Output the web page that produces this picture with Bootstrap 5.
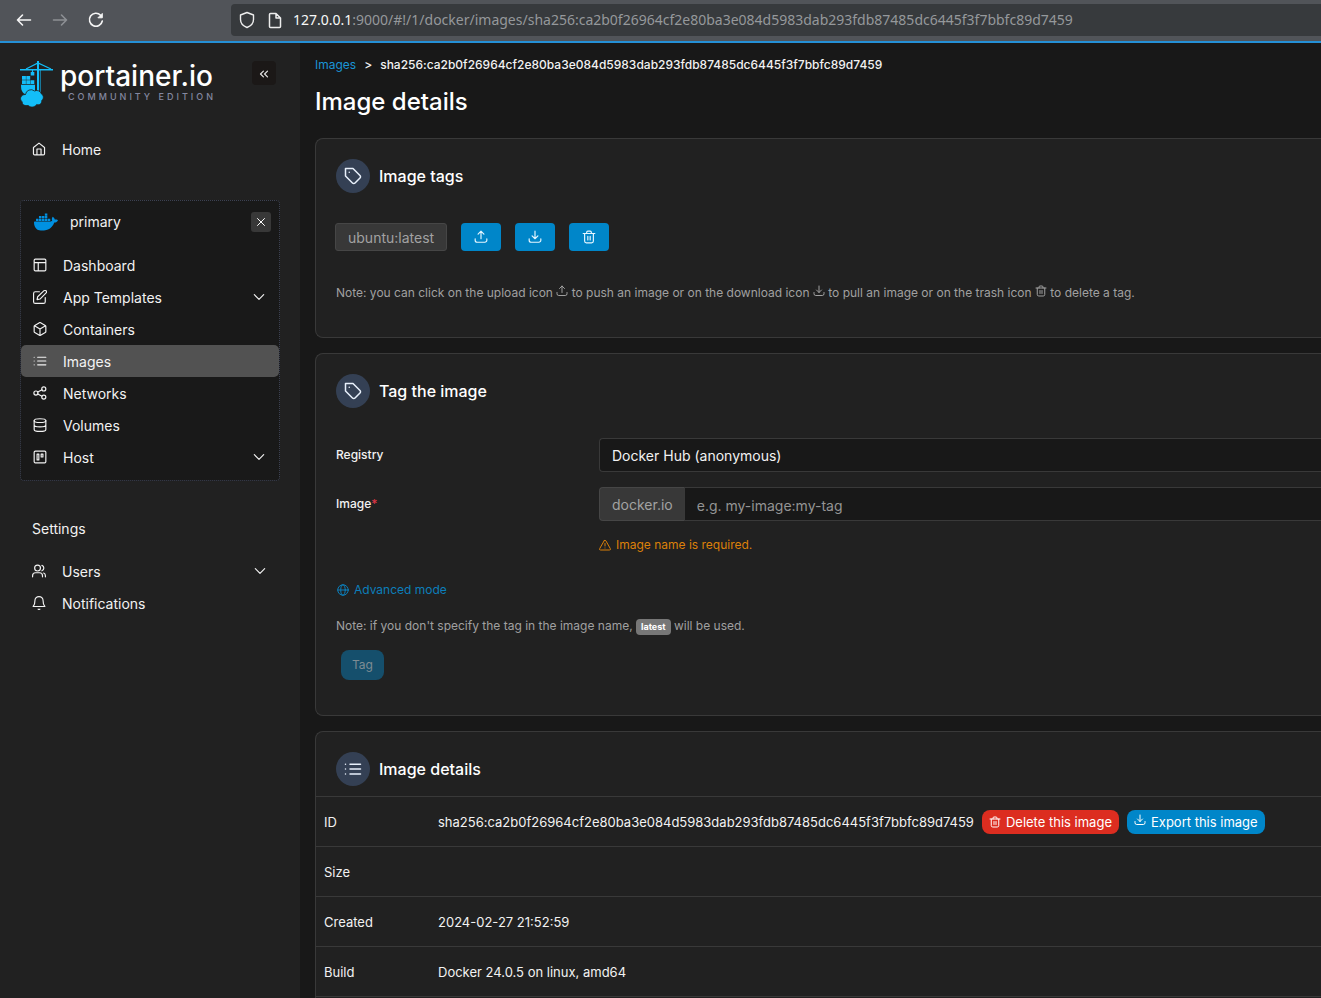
<!DOCTYPE html>
<html lang="en" data-bs-theme="dark">
<head>
<meta charset="utf-8">
<meta name="viewport" content="width=device-width, initial-scale=1">
<title>Portainer - Image details</title>
<link href="https://cdn.jsdelivr.net/npm/bootstrap@5.3.0/dist/css/bootstrap.min.css" rel="stylesheet">
<style>
  :root { --panel: #212121; --page: #181818; --line: #393939; --blue: #0086c9; --muted: #a0a0a0; }
  body { font-family: Inter, "Liberation Sans", sans-serif; font-size: 14px; line-height: 20px; background: var(--page); color: #f2f2f2; overflow: hidden; }
  a { text-decoration: none; }
  .ico { width: 14px; height: 14px; fill: none; stroke: currentColor; stroke-width: 2; stroke-linecap: round; stroke-linejoin: round; flex: none; }
  .ico-lg { width: 18px; height: 18px; }
  .ico-sm { width: 12px; height: 12px; }

  .toolbar { background: #515459; height: 43px; padding: 0 0 2px 12px; border-bottom: 2px solid #2590d6; gap: 12px; }
  .toolbar .tool { width: 24px; height: 32px; color: #f5f5f5; background: none; border: 0; padding: 0; }
  .toolbar .tool:disabled { color: #8d9094; }
  .toolbar .ico { width: 20px; height: 20px; }
  .address { background: #373a3d; border-radius: 4px 0 0 4px; margin-left: 111px; height: 32px; padding-left: 6px; color: #95989b; font: 14px/20px "Noto Sans", sans-serif; }
  .address b { color: #f8f8f8; font-weight: 400; }

  .side { width: 300px; flex: none; background: var(--panel); padding: 18px 20px; min-height: calc(100vh - 43px); }
  .brand-name { font: 500 28px/30px Inter, sans-serif; color: #fff; }
  .brand-sub { font: 500 9px/12px Inter, sans-serif; letter-spacing: 3px; color: #8488a0; padding-left: 8px; }
  .collapse-btn { width: 24px; height: 24px; background: #1b1817; border: 0; border-radius: 4px; color: #e5e5e5; padding: 0; }
  .side-link { height: 32px; padding: 1px 13px 0 12px; color: #f2f2f2; border-radius: 5px; }
  .side-link .ico:first-child { margin-right: 16px; margin-bottom: 2px; }
  .side-link .ico:last-child { margin-bottom: 2px; }
  .side-link.active { background: #525252; }
  .env { border: 1px dotted #3c4152; border-radius: 4px; background: #191919; margin-top: 35px; padding-bottom: 7px; }
  .env-head { padding: 9px 8px 7px 9px; }
  .env-close { width: 20px; height: 20px; background: #383838; border: 0; border-radius: 3px; color: #fff; padding: 0; }
  .side-title { padding: 38px 12px 16px; }

  .content { min-width: 0; padding: 12px 0 0 15px; }
  .crumbs { font-size: 12px; font-weight: 500; gap: 8px; }
  .crumbs a { color: #1a94d6; font-weight: 400; }
  .page-title { font-size: 24px; line-height: 32px; font-weight: 500; margin: 11px 0 20px; color: #fff; }
  .panel { background: var(--panel); border: 1px solid var(--line); border-right: 0; border-radius: 8px 0 0 8px; margin-bottom: 15px; }
  .panel-head { padding: 20px 20px 0; gap: 9px; }
  .panel-head h2 { font-size: 16px; line-height: 24px; font-weight: 500; margin: 0; color: #fff; }
  .disc { width: 34px; height: 34px; border-radius: 50%; background: #344054; color: #e8f0fb; }
  .tag-row { padding: 30px 0 0 19px; gap: 14px; }
  .tag-chip { height: 28px; padding: 4px 12px 0; background: #383838; border: 1px solid #464646; border-radius: 3px; color: #a2a2a2; }
  .tag-btn { width: 40px; height: 28px; padding: 0; background: var(--blue); border: 0; border-radius: 4px; color: #e6f6ff; }
  .note { font-size: 12px; line-height: 20px; color: var(--muted); margin: 0; }
  .note .ico { margin-bottom: 6px; }
  .tag-note { padding: 32px 20px 34px; }
  .tag-form { padding: 30px 0 35px 20px; }
  .field-name { flex: 0 0 263px; font-size: 12px; font-weight: 500; padding-top: 7px; }
  .field { min-width: 0; flex: 1; }
  .field .form-select, .field .form-control, .field .input-group-text { height: 34px; font-size: 14px; line-height: 20px; padding: 7px 12px 5px; background-color: #181818; border: 1px solid var(--line); border-right: 0; border-radius: 4px 0 0 4px; color: #f2f2f2; }
  .field .form-select { background-image: none; }
  .field .input-group-text { background-color: #383838; border-color: #464646; color: #a2a2a2; }
  .field .input-group .form-control { border-radius: 0; margin-left: 0; }
  .field .form-control::placeholder { color: #949494; }
  .image-row { margin-top: 15px; }
  .warn { color: #dc8009; font-size: 12px; gap: 5px; margin-top: 14px; }
  .mode { color: #0c7fbb; font-size: 12px; gap: 5px; margin: 25px 0 16px; padding-left: 1px; }
  .pill { font-size: 9px; line-height: 16px; font-weight: 700; background: #777; color: #fff; border-radius: 4px; padding: 0 5px; display: inline-block; height: 16px; vertical-align: middle; }
  .tag-submit { font-size: 12px; line-height: 18px; padding: 6px 11px; border: 0; border-radius: 8px; margin: 14px 0 0 5px; display: block; }
  .tag-submit:disabled { background: #154f6c; color: #7d8c93; }
  .facts { font-size: 13px; line-height: 20px; margin: 10px 0 40px; --bs-table-bg: transparent; --bs-table-color: #f2f2f2; }
  .facts > tbody > tr > * { height: 50px; padding: 0 8px; border: 0; border-top: 1px solid var(--line); vertical-align: middle; font-weight: 400; }
  .facts > tbody > tr:last-child > * { border-bottom: 1px solid var(--line); }
  .facts th { width: 114px; }
  .act { height: 24px; padding: 1px 7px 0; font-size: 13px; line-height: 20px; border: 0; border-radius: 8px; color: #fff; gap: 5px; }
  .act-del { background: #dc2d20; }
  .act-exp { background: var(--blue); }
  .act-exp .ico { margin-bottom: 4px; }
</style>
</head>
<body>
<svg class="d-none" aria-hidden="true">
  <symbol id="i-upload" viewBox="0 0 24 24"><path d="M2 15v2.500A3.500 3.500 0 0 0 5.500 21h13a3.500 3.500 0 0 0 3.500-3.500V15M17 7l-5-5-5 5M12 2v13"/></symbol>
  <symbol id="i-download" viewBox="0 0 24 24"><path d="M2 15v2.500A3.500 3.500 0 0 0 5.500 21h13a3.500 3.500 0 0 0 3.500-3.500V15M7 10l5 5 5-5M12 15V2"/></symbol>
  <symbol id="i-trash" viewBox="0 0 24 24"><path d="M2 6h20M19.500 6v13a3 3 0 0 1-3 3h-9a3 3 0 0 1-3-3V6M8 6V4a2 2 0 0 1 2-2h4a2 2 0 0 1 2 2v2M10 11v6M14 11v6"/></symbol>
  <symbol id="i-tag" viewBox="0 0 24 24"><path d="M12 2H2v10l9.300 9.300a2.400 2.400 0 0 0 3.400 0l6.600-6.600a2.400 2.400 0 0 0 0-3.400L12 2ZM7 7h.01"/></symbol>
  <symbol id="i-list" viewBox="0 0 24 24"><path d="M8 5.500h14M8 12h14M8 18.500h14M2 5.500h.01M2 12h.01M2 18.500h.01"/></symbol>
  <symbol id="i-down" viewBox="0 0 24 24"><path d="m4 8 8 8 8-8"/></symbol>
</svg>

<header class="toolbar d-flex align-items-center">
  <button class="tool" type="button" aria-label="Back"><svg class="ico" viewBox="0 0 20 20"><path d="M3.500 10h13M8.500 5l-5 5 5 5" stroke-width="1.600"/></svg></button>
  <button class="tool" type="button" aria-label="Forward" disabled><svg class="ico" viewBox="0 0 20 20"><path d="M3.500 10h13M11.500 5l5 5-5 5" stroke-width="1.600"/></svg></button>
  <button class="tool" type="button" aria-label="Reload"><svg class="ico" viewBox="0 0 20 20"><path d="M16.300 11A6.500 6.500 0 1 1 14.600 5.200" stroke-width="1.600"/><path d="M16.300 3.800v4h-4z" fill="currentColor" stroke-width="1"/></svg></button>
  <div class="address d-flex align-items-center flex-grow-1 text-nowrap overflow-hidden">
    <svg class="ico me-2" viewBox="0 0 20 20"><path d="M10 2.500 16.500 5v4.500c0 3.800-2.400 6.400-6.500 8-4.100-1.600-6.500-4.200-6.500-8V5z" stroke="#ededed" stroke-width="1.400"/></svg>
    <svg class="ico me-2" viewBox="0 0 20 20"><path d="M4.500 4.500a1 1 0 0 1 1-1H11L15.500 8v8.500a1 1 0 0 1-1 1h-9a1 1 0 0 1-1-1zM11 3.500V8h4.500" stroke="#ededed" stroke-width="1.500"/></svg>
    <span><b>127.0.0.1</b>:9000/#!/1/docker/images/sha256:ca2b0f26964cf2e80ba3e084d5983dab293fdb87485dc6445f3f7bbfc89d7459</span>
  </div>
</header>

<div class="d-flex">
  <aside class="side">
    <div class="d-flex align-items-start">
      <svg width="36" height="48" viewBox="0 0 36 48" class="me-1 flex-shrink-0" aria-hidden="true">
        <g fill="none" stroke="#13bef9">
          <path d="M0 8.700h33" stroke-width="1.500"/><path d="M6 8 18 2l13 6" stroke-width="1.200"/>
          <path d="M18 0v31" stroke-width="2"/><path d="M20.300 9v23" stroke-width="1" opacity=".7"/><path d="M12.500 9v5" stroke-width="1.200"/>
        </g>
        <g fill="#13bef9">
          <path d="M10.700 11h3.600v3.500h-3.600zM2 15h3.900v3.800H2zM6.300 15h3.900v3.800H6.300zM2 19.200h3.900v3.800H2zM6.300 19.200h3.900v3.800H6.300zM10.600 19.200h3.700v3.800h-3.700z"/>
          <path d="M1 23.700h14V30l-2 3H5c-3-1.500-4-4-4-9.300z"/>
          <path d="M5.500 33.500a5.500 5.500 0 0 1 9-3.500 5 5 0 0 1 7 3c2.500 1.500 2.300 5 .3 6.500 0 3.500-2.500 4.800-5 4-3 3.500-6.500 3-8.500 1-4 .5-6.500-1-6-3.500C-1 38 .5 33.500 5.500 33.500z" stroke="#212121" stroke-width=".8"/>
        </g>
      </svg>
      <div>
        <div class="brand-name">portainer.io</div>
        <div class="brand-sub text-nowrap">COMMUNITY EDITION</div>
      </div>
      <button class="collapse-btn ms-auto me-1" type="button" aria-label="Collapse sidebar"><svg class="ico" viewBox="0 0 24 24"><path d="m11 17-5-5 5-5M18 17l-5-5 5-5"/></svg></button>
    </div>

    <nav class="mt-4">
      <a href="#" class="side-link d-flex align-items-center"><svg class="ico" viewBox="0 0 24 24"><path d="M2.500 9.500 12 2l9.500 7.500V20a2 2 0 0 1-2 2h-15a2 2 0 0 1-2-2zM8.500 22v-10h7v10"/></svg>Home</a>
    </nav>

    <section class="env">
      <div class="env-head d-flex align-items-center mb-2">
        <svg width="24" height="24" viewBox="0 0 24 24" fill="#0091e2" class="ms-1 me-2" aria-hidden="true"><path d="M13.983 11.078h2.119a.186.186 0 00.186-.185V9.006a.186.186 0 00-.186-.186h-2.119a.185.185 0 00-.185.185v1.888c0 .102.083.185.185.185m-2.954-5.430h2.118a.186.186 0 00.186-.186V3.574a.186.186 0 00-.186-.185h-2.118a.185.185 0 00-.185.185v1.888c0 .102.082.185.185.185m0 2.716h2.118a.187.187 0 00.186-.186V6.290a.186.186 0 00-.186-.185h-2.118a.185.185 0 00-.185.185v1.887c0 .102.082.185.185.186m-2.930 0h2.120a.186.186 0 00.184-.186V6.290a.185.185 0 00-.185-.185H8.100a.185.185 0 00-.185.185v1.887c0 .102.083.185.185.186m-2.964 0h2.119a.186.186 0 00.185-.186V6.290a.185.185 0 00-.185-.185H5.136a.186.186 0 00-.186.185v1.887c0 .102.084.185.186.186m5.893 2.715h2.118a.186.186 0 00.186-.185V9.006a.186.186 0 00-.186-.186h-2.118a.185.185 0 00-.185.185v1.888c0 .102.082.185.185.185m-2.930 0h2.120a.185.185 0 00.184-.185V9.006a.185.185 0 00-.184-.186h-2.120a.185.185 0 00-.184.185v1.888c0 .102.083.185.185.185m-2.964 0h2.119a.185.185 0 00.185-.185V9.006a.185.185 0 00-.184-.186h-2.120a.186.186 0 00-.186.186v1.887c0 .102.084.185.186.185m-2.920 0h2.120a.185.185 0 00.184-.185V9.006a.185.185 0 00-.184-.186h-2.120a.185.185 0 00-.184.185v1.888c0 .102.082.185.185.185M23.763 9.890c-.065-.051-.672-.51-1.954-.51-.338.001-.676.03-1.010.087-.248-1.700-1.653-2.530-1.716-2.566l-.344-.199-.226.327c-.284.438-.49.922-.612 1.430-.23.970-.09 1.882.403 2.661-.595.332-1.550.413-1.744.420H.751a.751.751 0 00-.75.748 11.376 11.376 0 00.692 4.062c.545 1.428 1.355 2.480 2.410 3.124 1.180.723 3.100 1.137 5.275 1.137.983.003 1.963-.086 2.930-.266a12.248 12.248 0 003.823-1.389c.98-.567 1.860-1.288 2.610-2.136 1.252-1.418 1.998-2.997 2.553-4.400h.221c1.372 0 2.215-.549 2.680-1.009.309-.293.55-.65.707-1.046l.098-.288Z"/></svg>
        <span class="ms-1">primary</span>
        <button class="env-close ms-auto d-flex align-items-center justify-content-center" type="button" aria-label="Close environment"><svg class="ico ico-sm" viewBox="0 0 24 24"><path d="M5 5l14 14M19 5 5 19"/></svg></button>
      </div>
      <nav>
        <a href="#" class="side-link d-flex align-items-center"><svg class="ico" viewBox="0 0 24 24"><path d="M4 2h16a2 2 0 0 1 2 2v16a2 2 0 0 1-2 2H4a2 2 0 0 1-2-2V4a2 2 0 0 1 2-2zM2 8h20M9 22V8"/></svg>Dashboard</a>
        <a href="#" class="side-link d-flex align-items-center"><svg class="ico" viewBox="0 0 24 24"><path d="M11 3H4a3 3 0 0 0-3 3v14a3 3 0 0 0 3 3h14a3 3 0 0 0 3-3v-7M18.500 1.500a2.500 2.500 0 0 1 4 3.500L12 15.500l-5 1 1-5z"/></svg>App Templates<svg class="ico ms-auto"><use href="#i-down"/></svg></a>
        <a href="#" class="side-link d-flex align-items-center"><svg class="ico" viewBox="0 0 24 24"><path d="M22 16.500v-9a2 2 0 0 0-1-1.700l-8-4.600a2 2 0 0 0-2 0L3 5.800a2 2 0 0 0-1 1.700v9a2 2 0 0 0 1 1.700l8 4.600a2 2 0 0 0 2 0l8-4.600a2 2 0 0 0 1-1.700zM2.500 6.500 12 12l9.500-5.500M12 23V12"/></svg>Containers</a>
        <a href="#" class="side-link active d-flex align-items-center" aria-current="page"><svg class="ico"><use href="#i-list"/></svg>Images</a>
        <a href="#" class="side-link d-flex align-items-center"><svg class="ico" viewBox="0 0 24 24"><circle cx="18.500" cy="5" r="3.500"/><circle cx="5" cy="12" r="3.500"/><circle cx="18.500" cy="19" r="3.500"/><path d="m8.200 13.600 7.200 3.800M15.400 6.600l-7.200 3.800"/></svg>Networks</a>
        <a href="#" class="side-link d-flex align-items-center"><svg class="ico" viewBox="0 0 24 24"><ellipse cx="12" cy="4.500" rx="10" ry="3.200"/><path d="M2 4.500v15C2 21.300 6.500 23 12 23s10-1.700 10-3.500v-15M2 12c0 1.800 4.500 3.300 10 3.300S22 13.800 22 12"/></svg>Volumes</a>
        <a href="#" class="side-link d-flex align-items-center"><svg class="ico" viewBox="0 0 24 24"><rect x="2" y="2" width="20" height="20" rx="2"/><path d="M7 7h3v10H7zM14 7h3v5h-3z"/></svg>Host<svg class="ico ms-auto"><use href="#i-down"/></svg></a>
      </nav>
    </section>

    <div class="side-title">Settings</div>
    <nav>
      <a href="#" class="side-link d-flex align-items-center"><svg class="ico" viewBox="0 0 24 24"><circle cx="9.500" cy="7" r="5"/><path d="M1 22v-2a5 5 0 0 1 5-5h7a5 5 0 0 1 5 5v2M17 2.300a5 5 0 0 1 0 9.400M23 22v-2a5 5 0 0 0-3-4.600"/></svg>Users<svg class="ico ms-auto"><use href="#i-down"/></svg></a>
      <a href="#" class="side-link d-flex align-items-center"><svg class="ico" viewBox="0 0 24 24"><path d="M5 8a7 7 0 0 1 14 0c0 7 3 10 3 10H2s3-3 3-10M10.500 22.500a2 2 0 0 0 3 0"/></svg>Notifications</a>
    </nav>
  </aside>

  <main class="content flex-grow-1">
    <nav class="crumbs d-flex text-nowrap" aria-label="Breadcrumb"><a href="#">Images</a><span>&gt;</span><span>sha256:ca2b0f26964cf2e80ba3e084d5983dab293fdb87485dc6445f3f7bbfc89d7459</span></nav>
    <h1 class="page-title">Image details</h1>

    <section class="panel">
      <div class="panel-head d-flex align-items-center"><span class="disc d-flex align-items-center justify-content-center"><svg class="ico ico-lg"><use href="#i-tag"/></svg></span><h2>Image tags</h2></div>
      <div class="tag-row d-flex">
        <span class="tag-chip">ubuntu:latest</span>
        <button class="tag-btn d-flex align-items-center justify-content-center" type="button" aria-label="Push tag"><svg class="ico"><use href="#i-upload"/></svg></button>
        <button class="tag-btn d-flex align-items-center justify-content-center" type="button" aria-label="Pull tag"><svg class="ico"><use href="#i-download"/></svg></button>
        <button class="tag-btn d-flex align-items-center justify-content-center" type="button" aria-label="Delete tag"><svg class="ico"><use href="#i-trash"/></svg></button>
      </div>
      <p class="note tag-note">Note: you can click on the upload icon <svg class="ico ico-sm"><use href="#i-upload"/></svg> to push an image or on the download icon <svg class="ico ico-sm"><use href="#i-download"/></svg> to pull an image or on the trash icon <svg class="ico ico-sm"><use href="#i-trash"/></svg> to delete a tag.</p>
    </section>

    <section class="panel">
      <div class="panel-head d-flex align-items-center"><span class="disc d-flex align-items-center justify-content-center"><svg class="ico ico-lg"><use href="#i-tag"/></svg></span><h2>Tag the image</h2></div>
      <form class="tag-form">
        <div class="d-flex">
          <label class="field-name" for="registry">Registry</label>
          <div class="field"><select id="registry" class="form-select"><option>Docker Hub (anonymous)</option></select></div>
        </div>
        <div class="image-row d-flex">
          <label class="field-name" for="image">Image<span class="text-danger">*</span></label>
          <div class="field">
            <div class="input-group flex-nowrap"><span class="input-group-text">docker.io</span><input id="image" class="form-control" type="text" placeholder="e.g. my-image:my-tag"></div>
            <div class="warn d-flex align-items-center"><svg class="ico ico-sm" viewBox="0 0 24 24"><path d="M10.300 3.500 1.500 19a2 2 0 0 0 1.700 3h17.600a2 2 0 0 0 1.700-3L13.700 3.500a2 2 0 0 0-3.400 0zM12 9v5M12 18h.01"/></svg>Image name is required.</div>
          </div>
        </div>
        <a href="#" class="mode d-flex align-items-center"><svg class="ico ico-sm" viewBox="0 0 24 24"><circle cx="12" cy="12" r="10.500"/><ellipse cx="12" cy="12" rx="4.500" ry="10.500"/><path d="M1.500 12h21"/></svg>Advanced mode</a>
        <p class="note">Note: if you don't specify the tag in the image name, <span class="pill">latest</span> will be used.</p>
        <button class="tag-submit" type="submit" disabled>Tag</button>
      </form>
    </section>

    <section class="panel mb-0">
      <div class="panel-head d-flex align-items-center"><span class="disc d-flex align-items-center justify-content-center"><svg class="ico ico-lg"><use href="#i-list"/></svg></span><h2>Image details</h2></div>
      <table class="table facts">
        <tbody>
          <tr><th scope="row">ID</th><td><div class="d-flex align-items-center text-nowrap gap-2"><span>sha256:ca2b0f26964cf2e80ba3e084d5983dab293fdb87485dc6445f3f7bbfc89d7459</span>
            <button class="act act-del d-flex align-items-center" type="button"><svg class="ico ico-sm"><use href="#i-trash"/></svg>Delete this image</button>
            <button class="act act-exp d-flex align-items-center" type="button"><svg class="ico ico-sm"><use href="#i-download"/></svg>Export this image</button></div></td></tr>
          <tr><th scope="row">Size</th><td></td></tr>
          <tr><th scope="row">Created</th><td>2024-02-27 21:52:59</td></tr>
          <tr><th scope="row">Build</th><td>Docker 24.0.5 on linux, amd64</td></tr>
        </tbody>
      </table>
    </section>
  </main>
</div>
<script src="https://cdn.jsdelivr.net/npm/bootstrap@5.3.0/dist/js/bootstrap.bundle.min.js"></script>
</body>
</html>
